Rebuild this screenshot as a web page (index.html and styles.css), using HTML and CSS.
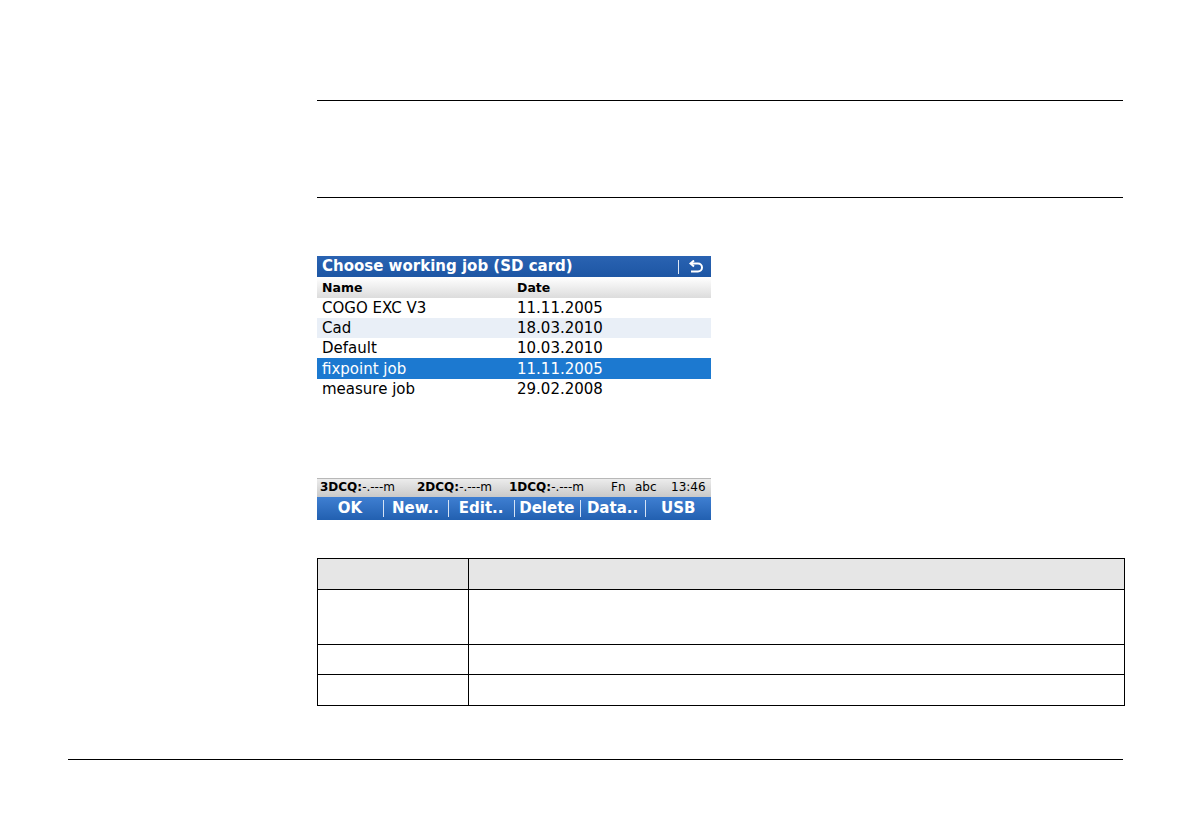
FILE: index.html
```html
<!DOCTYPE html>
<html>
<head>
<meta charset="utf-8">
<link rel="stylesheet" href="styles.css">
</head>
<body>
<div class="page">
  <div class="note"></div>
  <div class="screen">
    <div class="titlebar">
      <span class="title">Choose working job (SD card)</span>
      <span class="tsep"></span>
      <svg class="back" width="18" height="14" viewBox="0 0 18 14">
        <path d="M4 3.5 H11 A4 4 0 0 1 11 11.5 H4" fill="none" stroke="#fff" stroke-width="2"/>
        <path d="M7 0.5 L3.5 3.5 L7 6.5" fill="none" stroke="#fff" stroke-width="2"/>
      </svg>
    </div>
    <div class="row head"><span class="c1">Name</span><span class="c2">Date</span></div>
    <div class="row"><span class="c1">COGO EXC V3</span><span class="c2">11.11.2005</span></div>
    <div class="row alt"><span class="c1">Cad</span><span class="c2">18.03.2010</span></div>
    <div class="row"><span class="c1">Default</span><span class="c2">10.03.2010</span></div>
    <div class="row sel"><span class="c1">fixpoint job</span><span class="c2">11.11.2005</span></div>
    <div class="row"><span class="c1">measure job</span><span class="c2">29.02.2008</span></div>
    <div class="blank"></div>
    <div class="status">
      <span class="s s1"><b>3DCQ:</b>-.---m</span>
      <span class="s s2"><b>2DCQ:</b>-.---m</span>
      <span class="s s3"><b>1DCQ:</b>-.---m</span>
      <span class="s s4">Fn</span>
      <span class="s s5">abc</span>
      <span class="s s6">13:46</span>
    </div>
    <div class="keys">
      <span class="key">OK</span>
      <span class="key">New..</span>
      <span class="key">Edit..</span>
      <span class="key">Delete</span>
      <span class="key">Data..</span>
      <span class="key">USB</span>
    </div>
  </div>
  <table class="desc">
    <tr class="th"><td class="k"></td><td></td></tr>
    <tr class="r1"><td class="k"></td><td></td></tr>
    <tr class="r2"><td class="k"></td><td></td></tr>
    <tr class="r3"><td class="k"></td><td></td></tr>
  </table>
</div>
<div class="footer"></div>
</body>
</html>
```

FILE: styles.css
```css
html, body {
  margin: 0;
  padding: 0;
  background: #fff;
  font-family: "DejaVu Sans", sans-serif;
}
.page {
  margin-left: 317px;
  width: 806px;
  padding-top: 100px;
}
.note {
  height: 96px;
  border-top: 1px solid #000;
  border-bottom: 1px solid #000;
}
.screen {
  width: 394px;
  margin-top: 58px;
}
.titlebar {
  height: 21px;
  background: linear-gradient(#2a63b2, #1d56a4);
  display: flex;
  align-items: center;
  color: #fff;
}
.title {
  font-weight: bold;
  font-size: 15px;
  padding-left: 5px;
  flex: 1;
  line-height: 21px;
  white-space: nowrap;
}
.tsep {
  width: 1px;
  height: 14px;
  background: #dfe8f5;
  margin-right: 8px;
}
.back {
  margin-right: 6px;
}
.row {
  height: 20px;
  display: flex;
  align-items: center;
  font-size: 15px;
  color: #000;
  white-space: nowrap;
}
.row .c1 {
  width: 195px;
  padding-left: 5px;
}
.row.head {
  font-weight: bold;
  font-size: 12.5px;
  background: linear-gradient(#ffffff, #dcdcdc);
  height: 21px;
}
.row.alt { background: #e9eff7; }
.row.sel { background: #1c79d0; color: #fff; height: 21px; }
.blank { height: 79px; }
.status {
  height: 19px;
  background: linear-gradient(#ececec, #c9c9c9);
  border-top: 1px solid #b8b8b8;
  box-sizing: border-box;
  position: relative;
  font-size: 12px;
  color: #000;
}
.s {
  position: absolute;
  top: 1px;
  white-space: nowrap;
}
.s1 { left: 3px; }
.s2 { left: 100px; }
.s3 { left: 192px; }
.s4 { left: 294px; }
.s5 { left: 318px; }
.s6 { left: 354px; }
.keys {
  height: 23px;
  display: flex;
  background: linear-gradient(#3f7fd2, #2260b0);
}
.key {
  flex: 1;
  text-align: center;
  color: #fff;
  font-weight: bold;
  font-size: 15px;
  line-height: 23px;
  position: relative;
  white-space: nowrap;
}
.key + .key::before {
  content: "";
  position: absolute;
  left: 0;
  top: 3px;
  bottom: 3px;
  width: 1px;
  background: #d6e3f5;
}
.desc {
  margin-top: 38px;
  width: 808px;
  border-collapse: collapse;
}
.desc td {
  border: 1.5px solid #000;
  padding: 0;
}
.desc td.k { width: 150px; }
.desc .th td { background: #e6e6e6; height: 30px; }
.desc .r1 td { height: 54px; }
.desc .r2 td { height: 29px; }
.desc .r3 td { height: 30px; }
.footer {
  margin-left: 68px;
  width: 1055px;
  margin-top: 53px;
  border-top: 1.5px solid #000;
}
```
